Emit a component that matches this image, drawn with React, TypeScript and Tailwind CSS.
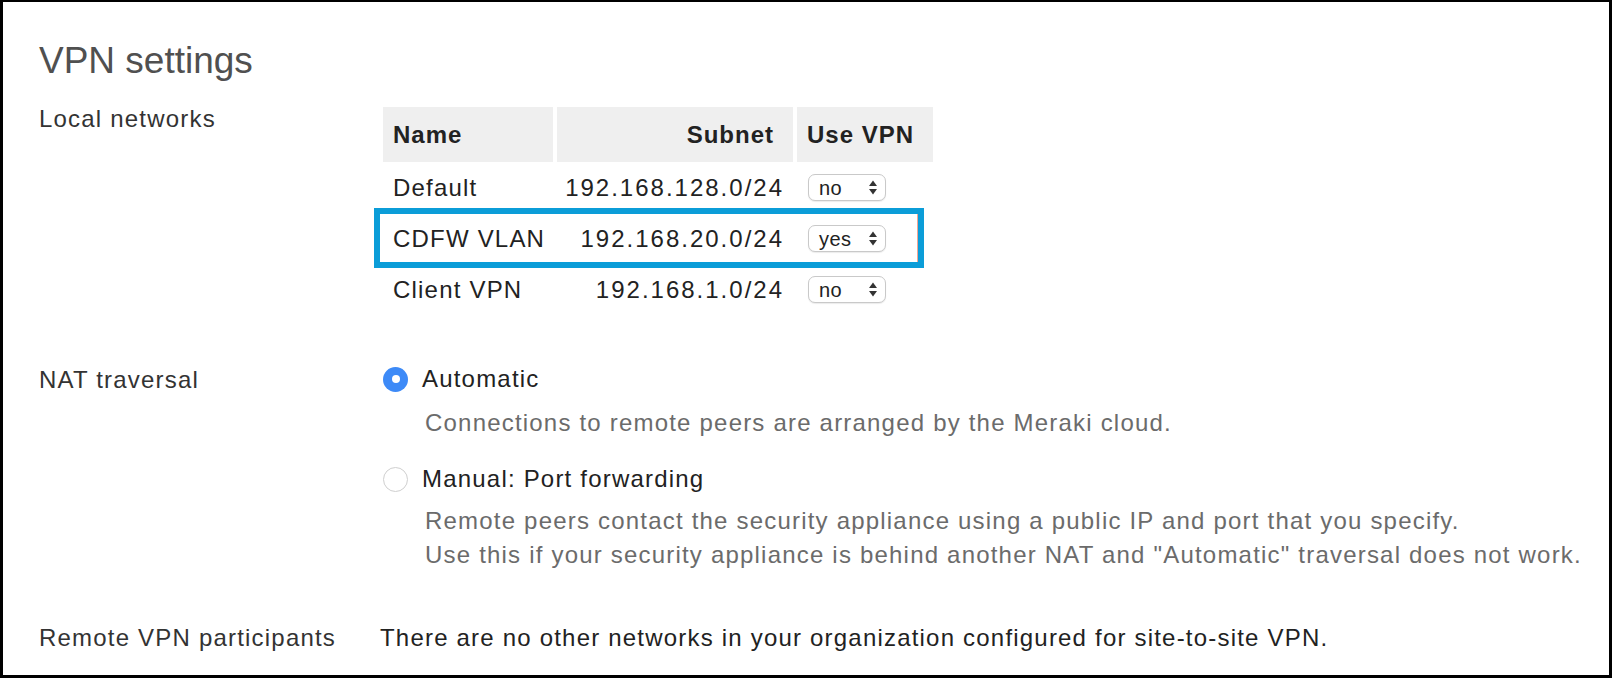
import React from 'react';

type Net = { name: string; subnet: string; vpn: string; highlight?: boolean };

const nets: Net[] = [
  { name: 'Default', subnet: '192.168.128.0/24', vpn: 'no' },
  { name: 'CDFW VLAN', subnet: '192.168.20.0/24', vpn: 'yes', highlight: true },
  { name: 'Client VPN', subnet: '192.168.1.0/24', vpn: 'no' },
];

// fake native select (mac style)
const Select = ({ value }: { value: string }) => (
  <div className="flex items-center justify-between w-[78px] h-[27px] rounded-[7px] border border-[#c9c9c9] bg-white shadow-[0_1px_1px_rgba(0,0,0,0.08)] pl-[10px] pr-[7px] text-[20px] text-[#222] tracking-[0.5px]">
    <span className="leading-none">{value}</span>
    <svg width="10" height="17" viewBox="0 0 10 17">
      <path d="M5 1.5 L9 7 H1 Z" fill="#333" />
      <path d="M5 15.5 L9 10 H1 Z" fill="#333" />
    </svg>
  </div>
);

const Radio = ({ checked }: { checked?: boolean }) =>
  checked ? (
    <div className="w-[25px] h-[25px] rounded-full bg-[#3d8af7] flex items-center justify-center shrink-0">
      <div className="w-[8px] h-[8px] rounded-full bg-white" />
    </div>
  ) : (
    <div className="w-[25px] h-[25px] rounded-full border border-[#cfcfcf] bg-white shrink-0" />
  );

export default function App() {
  return (
    <div
      className="w-[1612px] h-[678px] bg-white border-t-2 border-l-[3px] border-r-[3px] border-b-[3px] border-black text-[#333] tracking-[1.2px] overflow-hidden"
      style={{ fontFamily: '"Liberation Sans", Arial, sans-serif' }}
    >
      <div className="pl-[36px] pt-[40px]">
        <h1 className="text-[37px] font-light text-[#505050] leading-none tracking-normal">VPN settings</h1>

        {/* Local networks */}
        <div className="flex mt-[20px]">
          <div className="w-[344px] shrink-0 text-[24px] pt-[8px] leading-none">Local networks</div>
          <div className="mt-[8px]">
            <div className="flex gap-[4px] h-[55px] text-[24px] font-bold text-[#222] tracking-[1px]">
              <div className="w-[170px] bg-[#efefef] flex items-center pl-[10px]">Name</div>
              <div className="w-[236px] bg-[#efefef] flex items-center justify-end pr-[19px]">Subnet</div>
              <div className="w-[136px] bg-[#efefef] flex items-center pl-[10px]">Use VPN</div>
            </div>
            <div className="flex flex-col text-[24px] text-[#222]">
              {nets.map((n) => (
                <div key={n.name} className="relative flex gap-[4px] h-[51px] items-center">
                  <div className="w-[170px] pl-[10px]">{n.name}</div>
                  <div className="w-[236px] text-right pr-[9px] tracking-[2px]">{n.subnet}</div>
                  <div className="w-[136px] pl-[11px]">
                    <Select value={n.vpn} />
                  </div>
                  {n.highlight && (
                    <div className="absolute left-[-9px] top-[-5px] w-[550px] h-[60px] border-[6px] border-[#0b9dd8]">
                      <div className="absolute right-0 top-0 bottom-0 w-px bg-[#f3a593]" />
                    </div>
                  )}
                </div>
              ))}
            </div>
          </div>
        </div>

        {/* NAT traversal */}
        <div className="flex mt-[50px] text-[24px]">
          <div className="w-[344px] shrink-0 leading-none pt-[3px]">NAT traversal</div>
          <div className="flex flex-col">
            <div className="flex items-center gap-[14px] h-[28px]">
              <Radio checked />
              <span className="text-[#222]">Automatic</span>
            </div>
            <div className="pl-[42px] mt-[12px] text-[#6b6b6b]">
              Connections to remote peers are arranged by the Meraki cloud.
            </div>
            <div className="flex items-center gap-[14px] h-[28px] mt-[24px]">
              <Radio />
              <span className="text-[#222]">Manual: Port forwarding</span>
            </div>
            <div className="pl-[42px] mt-[11px] text-[#6b6b6b] leading-[34px]">
              <div>Remote peers contact the security appliance using a public IP and port that you specify.</div>
              <div>Use this if your security appliance is behind another NAT and "Automatic" traversal does not work.</div>
            </div>
          </div>
        </div>

        {/* Remote VPN participants */}
        <div className="flex mt-[48px] text-[24px]">
          <div className="w-[341px] shrink-0">Remote VPN participants</div>
          <div className="text-[#222]">There are no other networks in your organization configured for site-to-site VPN.</div>
        </div>
      </div>
    </div>
  );
}
